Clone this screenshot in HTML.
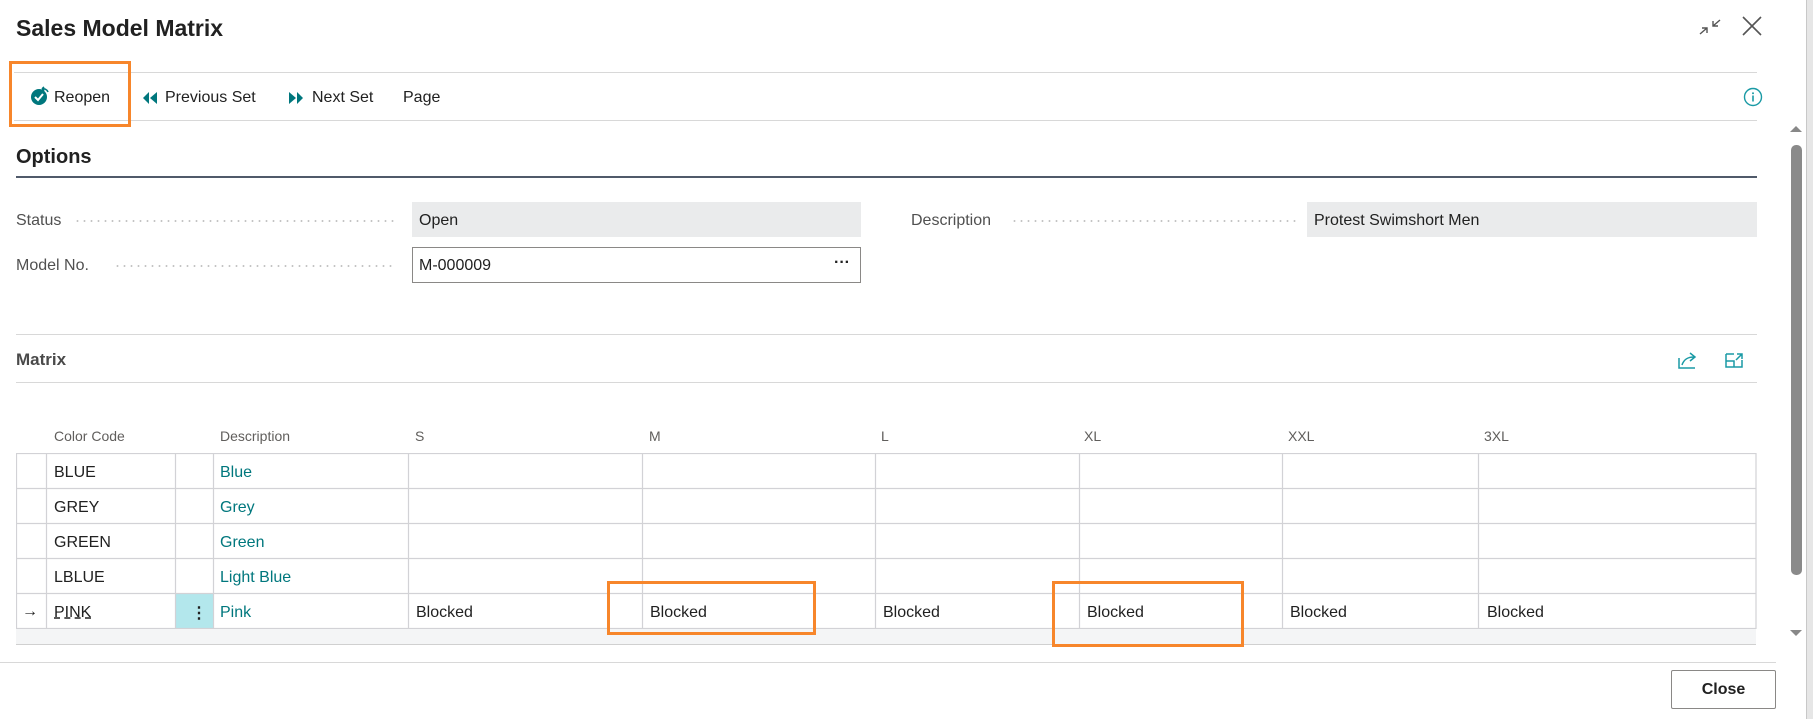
<!DOCTYPE html>
<html><head><meta charset="utf-8"><style>
*{box-sizing:border-box;margin:0;padding:0}
body{width:1813px;height:719px;background:#fff;font-family:"Segoe UI","Liberation Sans",sans-serif;color:#212121;position:relative;overflow:hidden}
.a{position:absolute;white-space:nowrap}
.hl{position:absolute;height:1px;background:#d8d8d8}
.lbl{font-size:16px;color:#505050}
.dots{position:absolute;height:2px;background:radial-gradient(circle,#c4c4c4 0.9px,transparent 1.1px) 0 0/7px 2px repeat-x}
.hd{font-size:14px;color:#605e5c;top:428px}
.c{font-size:16px;color:#212121}
.t{color:#00777d}
.ob{position:absolute;border:3px solid #f7862b}
</style></head><body>
<div class="a" style="left:16px;top:15px;font-size:23px;font-weight:600;color:#212121">Sales Model Matrix</div>
<svg class="a" style="left:1696px;top:14px" width="28" height="28" viewBox="0 0 28 28" fill="none" stroke="#555" stroke-width="1.4"><path d="M4 20l7-6M6 14h5v5M24 6l-7 6M22 12h-5V7"/></svg>
<svg class="a" style="left:1740px;top:14px" width="24" height="24" viewBox="0 0 24 24" stroke="#555" stroke-width="1.6"><path d="M3 3l18 18M21 3L3 21"/></svg>

<div class="hl" style="left:14px;width:1743px;top:72px"></div>
<div class="hl" style="left:14px;width:1743px;top:120px"></div>
<div class="ob" style="left:9px;top:61px;width:122px;height:66px"></div>
<svg class="a" style="left:30px;top:86px" width="20" height="20" viewBox="0 0 20 20"><circle cx="9" cy="11" r="8" fill="#00777d"/><path d="M5 11l3 3 5-6" stroke="#fff" stroke-width="2" fill="none"/><path d="M12 3a5 5 0 0 1 6 3M12 3l2-2M12 3l2 2" stroke="#00777d" stroke-width="1.6" fill="none"/></svg>
<div class="a c" style="left:54px;top:89px">Reopen</div>
<svg class="a" style="left:141px;top:90px" width="18" height="16" viewBox="0 0 18 16" fill="#00777d"><path d="M8 2v12L2 8z"/><path d="M16 2v12L9 8z"/></svg>
<div class="a c" style="left:165px;top:89px">Previous Set</div>
<svg class="a" style="left:287px;top:90px" width="18" height="16" viewBox="0 0 18 16" fill="#00777d"><path d="M2 2v12l7-6z"/><path d="M10 2v12l6-6z"/></svg>
<div class="a c" style="left:312px;top:89px">Next Set</div>
<div class="a c" style="left:403px;top:89px">Page</div>
<svg class="a" style="left:1743px;top:87px" width="20" height="20" viewBox="0 0 20 20"><circle cx="10" cy="10" r="8.5" fill="none" stroke="#1a9aa5" stroke-width="1.4"/><rect x="9.2" y="8.5" width="1.6" height="6" fill="#1a9aa5"/><circle cx="10" cy="6.2" r="1" fill="#1a9aa5"/></svg>

<div class="a" style="left:16px;top:146px;font-size:20px;font-weight:600">Options</div>
<div class="a" style="left:16px;top:176px;width:1741px;height:2px;background:#505a6a"></div>

<div class="a lbl" style="left:16px;top:212px">Status</div>
<div class="dots" style="left:74px;width:322px;top:220px"></div>
<div class="a" style="left:412px;top:202px;width:449px;height:35px;background:#eaebec"></div>
<div class="a c" style="left:419px;top:212px">Open</div>
<div class="a lbl" style="left:16px;top:257px">Model No.</div>
<div class="dots" style="left:114px;width:282px;top:265px"></div>
<div class="a" style="left:412px;top:247px;width:449px;height:36px;border:1px solid #8a8886"></div>
<div class="a c" style="left:419px;top:257px">M-000009</div>
<div class="a c" style="left:834px;top:254px;font-weight:bold">···</div>
<div class="a lbl" style="left:911px;top:212px">Description</div>
<div class="dots" style="left:1011px;width:286px;top:220px"></div>
<div class="a" style="left:1307px;top:202px;width:450px;height:35px;background:#eaebec"></div>
<div class="a c" style="left:1314px;top:212px">Protest Swimshort Men</div>

<div class="hl" style="left:16px;width:1741px;top:334px"></div>
<div class="a" style="left:16px;top:350px;font-size:17px;font-weight:600;color:#4a4a4a">Matrix</div>
<div class="hl" style="left:16px;width:1741px;top:382px"></div>
<svg class="a" style="left:1677px;top:350px" width="22" height="20" viewBox="0 0 22 20" fill="none" stroke="#1a9aa5" stroke-width="1.5"><path d="M2 8v10h16M5 15c2-6 6-8 12-8M13 3l5 4-5 4"/></svg>
<svg class="a" style="left:1724px;top:350px" width="20" height="20" viewBox="0 0 20 20" fill="none" stroke="#1a9aa5" stroke-width="1.5"><path d="M2 4h8M2 4v13h16V10M2 11h8v6M12 10l6-6M13 4h5v5"/></svg>

<div class="a hd" style="left:54px">Color Code</div>
<div class="a hd" style="left:220px">Description</div>
<div class="a hd" style="left:415px">S</div>
<div class="a hd" style="left:649px">M</div>
<div class="a hd" style="left:881px">L</div>
<div class="a hd" style="left:1084px">XL</div>
<div class="a hd" style="left:1288px">XXL</div>
<div class="a hd" style="left:1484px">3XL</div>

<div class="a" style="left:16px;top:628px;width:1740px;height:17px;background:#f4f5f6;border-bottom:1px solid #d0d0d0"></div>
<div class="a" style="left:175px;top:593px;width:38px;height:35px;background:#b3e7ec"></div>
<svg class="a" style="left:16px;top:453px" width="1741" height="176">
<g stroke="#d2d2d6" stroke-width="1.2">
<path d="M0 0.5H1740M0 35.5H1740M0 70.5H1740M0 105.5H1740M0 140.5H1740M0 175.5H1740"/>
<path d="M0.5 0V176M30.5 0V176M159.5 0V176M197.5 0V176M392.5 0V176M626.5 0V176M859.5 0V176M1063.5 0V176M1266.5 0V176M1462.5 0V176M1740 0V176"/>
</g></svg>
<div class="a c" style="left:54px;top:464px">BLUE</div><div class="a c t" style="left:220px;top:464px">Blue</div>
<div class="a c" style="left:54px;top:499px">GREY</div><div class="a c t" style="left:220px;top:499px">Grey</div>
<div class="a c" style="left:54px;top:534px">GREEN</div><div class="a c t" style="left:220px;top:534px">Green</div>
<div class="a c" style="left:54px;top:569px">LBLUE</div><div class="a c t" style="left:220px;top:569px">Light Blue</div>
<div class="a c" style="left:22px;top:603px">→</div>
<div class="a c" style="left:54px;top:604px;text-decoration:underline dashed">PINK</div>
<div class="a c" style="left:191px;top:603px;font-weight:bold">⋮</div>
<div class="a c t" style="left:220px;top:604px">Pink</div>
<div class="a c" style="left:416px;top:604px">Blocked</div>
<div class="a c" style="left:650px;top:604px">Blocked</div>
<div class="a c" style="left:883px;top:604px">Blocked</div>
<div class="a c" style="left:1087px;top:604px">Blocked</div>
<div class="a c" style="left:1290px;top:604px">Blocked</div>
<div class="a c" style="left:1487px;top:604px">Blocked</div>
<div class="ob" style="left:607px;top:581px;width:209px;height:54px"></div>
<div class="ob" style="left:1052px;top:581px;width:192px;height:66px"></div>

<div class="hl" style="left:0;width:1776px;top:662px"></div>
<div class="a" style="left:1671px;top:670px;width:105px;height:39px;border:1px solid #8a8886;border-radius:2px;font-size:16px;font-weight:600;text-align:center;line-height:37px">Close</div>

<div class="a" style="left:1790px;top:126px;width:0;height:0;border-left:6px solid transparent;border-right:6px solid transparent;border-bottom:6px solid #888"></div>
<div class="a" style="left:1791px;top:145px;width:11px;height:430px;background:#8a8a8a;border-radius:5px"></div>
<div class="a" style="left:1790px;top:630px;width:0;height:0;border-left:6px solid transparent;border-right:6px solid transparent;border-top:6px solid #888"></div>
<div class="a" style="left:1806px;top:0;width:7px;height:719px;background:#e6e6e6;border-left:1px solid #c8c8c8"></div>
</body></html>
